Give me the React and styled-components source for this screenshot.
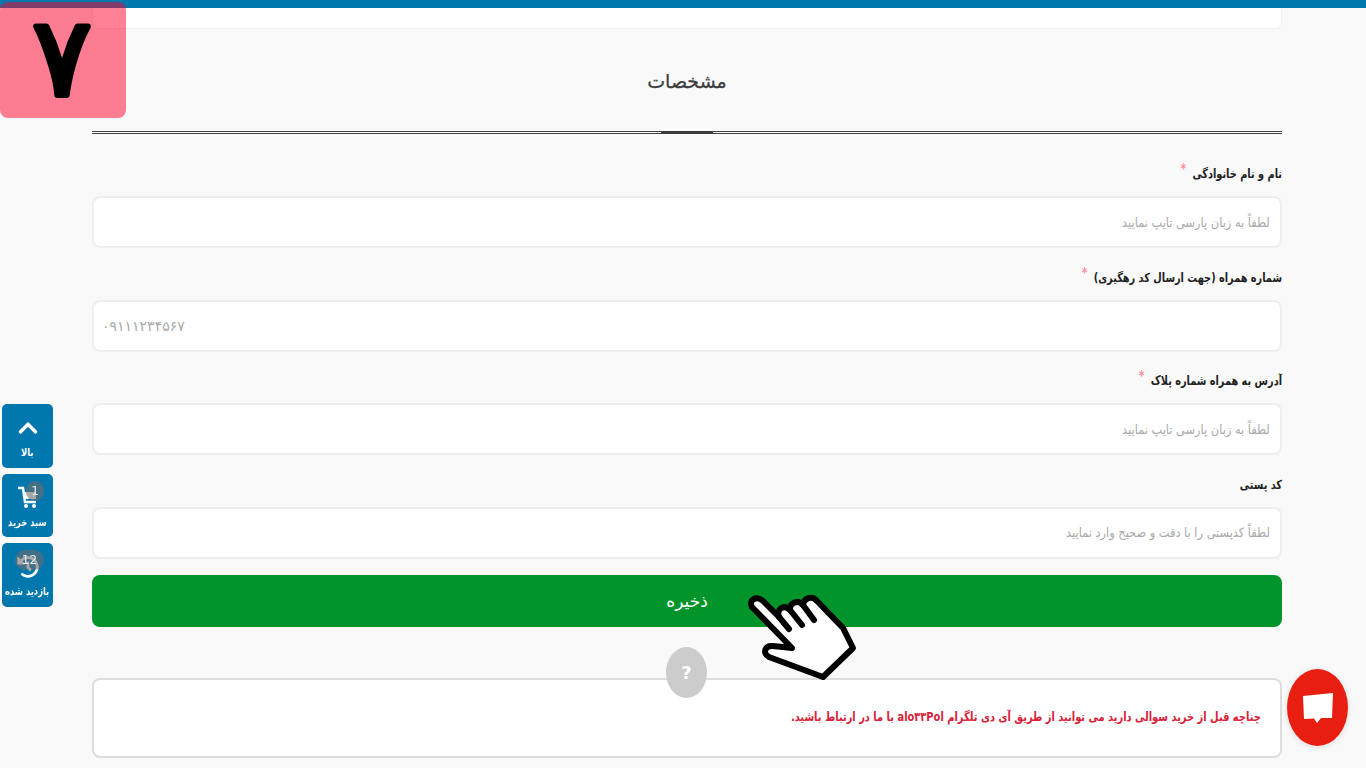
import React from "react";
import styled, { createGlobalStyle } from "styled-components";
import { FaChevronUp, FaHistory } from "react-icons/fa";

const font = `"DejaVu Sans", "Noto Sans", sans-serif`;

const Global = createGlobalStyle`
  html, body { margin: 0; padding: 0; height: 768px; overflow: hidden; background: #f9f9f9; }
  body { font-family: ${font}; }
  * { box-sizing: border-box; }
`;

const TopBar = styled.div`
  height: 8px;
  background: #0077ad;
`;
const Main = styled.main`
  width: 1190px;
  margin-left: 92px;
  direction: rtl;
`;
const TopCard = styled.div`
  height: 21px;
  background: #fff;
  border: 1px solid #f1f1f1;
  border-top: 0;
  border-radius: 0 0 6px 6px;
`;
const Heading = styled.h2`
  margin: 0;
  height: 105px;
  padding-top: 37px;
  text-align: center;
  font-size: 19px;
  line-height: 30px;
  font-weight: 400;
  color: #3c3c3c;
  -webkit-text-stroke: 0.25px #3c3c3c;
  border-bottom: 3px double #444;
  position: relative;
  &::after {
    content: "";
    position: absolute;
    left: 569px;
    bottom: -3px;
    width: 52px;
    height: 3px;
    background: #3c3c3c;
  }
`;
const Form = styled.form`
  display: flex;
  flex-direction: column;
  padding-top: 30px;
`;
const Field = styled.div`
  height: 103.5px;
  display: flex;
  flex-direction: column;
`;
const Label = styled.label`
  height: 32px;
  display: flex;
  align-items: flex-start;
  padding-top: 1px;
  font-size: 12.5px;
  line-height: 18px;
  font-weight: 700;
  color: #222;
  transform: scaleX(0.78);
  transform-origin: right center;
`;
const Star = styled.span`
  color: #ff8fa0;
  font-size: 14px;
  margin-right: 8px;
  margin-top: -6px;
`;
const Input = styled.div`
  height: 52px;
  padding: 0 10px 0 8px;
  display: flex;
  align-items: center;
  background: #fff;
  border: 2px solid #eee;
  border-radius: 8px;
  font-size: 13px;
  color: #aaa;
  justify-content: ${(p) => (p.$end ? "flex-end" : "flex-start")};
`;
const Placeholder = styled.span`
  display: block;
  transform: scaleX(0.875);
  transform-origin: right center;
`;
const Digits = styled.span`
  letter-spacing: 1.9px;
  font-size: 14px;
`;
const Save = styled.button`
  display: block;
  width: 100%;
  height: 52px;
  margin-top: -3px;
  border: 0;
  border-radius: 8px;
  background: #00942b;
  color: #fff;
  font-family: ${font};
  font-size: 17px;
`;
const NoteBox = styled.div`
  position: relative;
  height: 80px;
  margin-top: 51px;
  padding: 0 19px 3px;
  display: flex;
  align-items: center;
  background: #fff;
  border: 2px solid #ddd;
  border-radius: 8px;
  color: #d9213a;
  font-size: 12.5px;
  font-weight: 700;
`;
const NoteText = styled.p`
  margin: 0;
  white-space: nowrap;
  transform: scaleX(0.79);
  transform-origin: right center;
`;
const Question = styled.div`
  position: absolute;
  left: 572px;
  top: -33px;
  width: 41px;
  height: 51px;
  border-radius: 50%;
  background: #ccc;
  color: #fff;
  font-size: 18px;
  font-weight: 700;
  display: flex;
  align-items: center;
  justify-content: center;
`;
const StepBadge = styled.div`
  position: fixed;
  left: 0;
  top: 2px;
  width: 126px;
  height: 116px;
  border-radius: 8px;
  background: rgba(255, 0, 44, 0.5);
`;
const StepSvg = styled.svg`
  display: block;
  overflow: visible;
`;
const StepDigit = styled.text`
  font-family: ${font};
  font-size: 108px;
  fill: #000;
  stroke: #000;
  stroke-width: 6px;
  stroke-linejoin: round;
  text-anchor: middle;
`;
const Side = styled.nav`
  position: fixed;
  left: 2px;
  top: 404px;
  display: flex;
  flex-direction: column;
  gap: 6px;
`;
const SideButton = styled.div`
  position: relative;
  width: 51px;
  height: 63.5px;
  padding-top: 11px;
  background: #0077ad;
  border-radius: 5px;
  color: #fff;
  display: flex;
  flex-direction: column;
  align-items: center;
  gap: 5px;
  direction: rtl;
`;
const Caption = styled.span`
  font-size: 11px;
  font-weight: 700;
  line-height: 14px;
  white-space: nowrap;
  transform: scaleX(0.76);
`;
const Count = styled.span`
  position: absolute;
  top: 7px;
  left: ${(p) => p.$left}px;
  width: ${(p) => p.$w}px;
  height: 20px;
  border-radius: 10px;
  background: rgba(110, 110, 110, 0.6);
  display: flex;
  align-items: center;
  justify-content: center;
  font-size: 12px;
  font-weight: 400;
  color: #eee;
`;
const IconBox = styled.span`
  height: 26px;
  display: flex;
  align-items: center;
  font-size: 22px;
`;
const Chat = styled.div`
  position: fixed;
  left: 1287px;
  top: 669px;
  width: 61px;
  height: 77px;
  border-radius: 50%;
  background: #e81f10;
  box-shadow: 0 1px 6px rgba(0, 0, 0, 0.12);
  display: flex;
  align-items: center;
  justify-content: center;
`;
const Hand = styled.svg`
  position: fixed;
  left: 745px;
  top: 590px;
  width: 115px;
  height: 95px;
`;

function CartIcon() {
  return (
    <svg width="22" height="26" viewBox="0 0 22 26" fill="none">
      <path d="M1 3h5l2 14h11" stroke="#fff" strokeWidth="2.5" />
      <path d="M7 7h12v7H8z" fill="#fff" />
      <circle cx="9" cy="21" r="2" fill="#fff" />
      <circle cx="17" cy="21" r="2" fill="#fff" />
    </svg>
  );
}

const fields = [
  { label: "نام و نام خانوادگی", star: true, ph: "لطفاً به زبان پارسی تایپ نمایید" },
  { label: "شماره همراه (جهت ارسال کد رهگیری)", star: true, digits: "۰۹۱۱۱۲۳۴۵۶۷" },
  { label: "آدرس به همراه شماره پلاک", star: true, ph: "لطفاً به زبان پارسی تایپ نمایید" },
  { label: "کد پستی", ph: "لطفاً کدپستی را با دقت و صحیح وارد نمایید" },
];

export default function App() {
  return (
    <>
      <Global />
      <TopBar />
      <Main>
        <TopCard />
        <Heading>مشخصات</Heading>
        <Form>
          {fields.map((f) => (
            <Field key={f.label}>
              <Label>
                {f.label}
                {f.star && <Star>*</Star>}
              </Label>
              <Input $end={!!f.digits}>
                {f.digits ? <Digits>{f.digits}</Digits> : <Placeholder>{f.ph}</Placeholder>}
              </Input>
            </Field>
          ))}
          <Save type="button">ذخیره</Save>
        </Form>
        <NoteBox>
          <Question>?</Question>
          <NoteText>
            چناچه قبل از خرید سوالی دارید می توانید از طریق آی دی تلگرام <bdi dir="ltr">alo۳۳Pol</bdi> با ما در ارتباط باشید.
          </NoteText>
        </NoteBox>
      </Main>

      <StepBadge>
        <StepSvg width="126" height="116" viewBox="0 0 126 116">
          <StepDigit x="62" y="93">۷</StepDigit>
        </StepSvg>
      </StepBadge>

      <Side>
        <SideButton>
          <IconBox><FaChevronUp /></IconBox>
          <Caption>بالا</Caption>
        </SideButton>
        <SideButton>
          <IconBox><CartIcon /></IconBox>
          <Caption>سبد خرید</Caption>
          <Count $left={24} $w={18}>1</Count>
        </SideButton>
        <SideButton>
          <IconBox><FaHistory /></IconBox>
          <Caption>بازدید شده</Caption>
          <Count $left={13} $w={29}>12</Count>
        </SideButton>
      </Side>

      <Hand viewBox="0 0 115 95">
        <path
          d="M7 17C3 10 12 5 18 11L34 27C31 19 39 14 45 20C44 13 53 9 58 15C59 8 67 5 72 11L98 38L108 58L78 87L24 67C17 63 20 55 28 56L47 58Z"
          fill="#fff"
          stroke="#000"
          strokeWidth="6"
          strokeLinejoin="round"
        />
        <path d="M34 27L44 39M45 20L57 35M58 15L69 30" stroke="#000" strokeWidth="6" strokeLinecap="round" />
      </Hand>

      <Chat>
        <svg width="32" height="32" viewBox="0 0 32 32">
          <path d="M1 4L31 1L30 26L19 26L15 31L12 26.500L2 27Z" fill="#fff" />
        </svg>
      </Chat>
    </>
  );
}
